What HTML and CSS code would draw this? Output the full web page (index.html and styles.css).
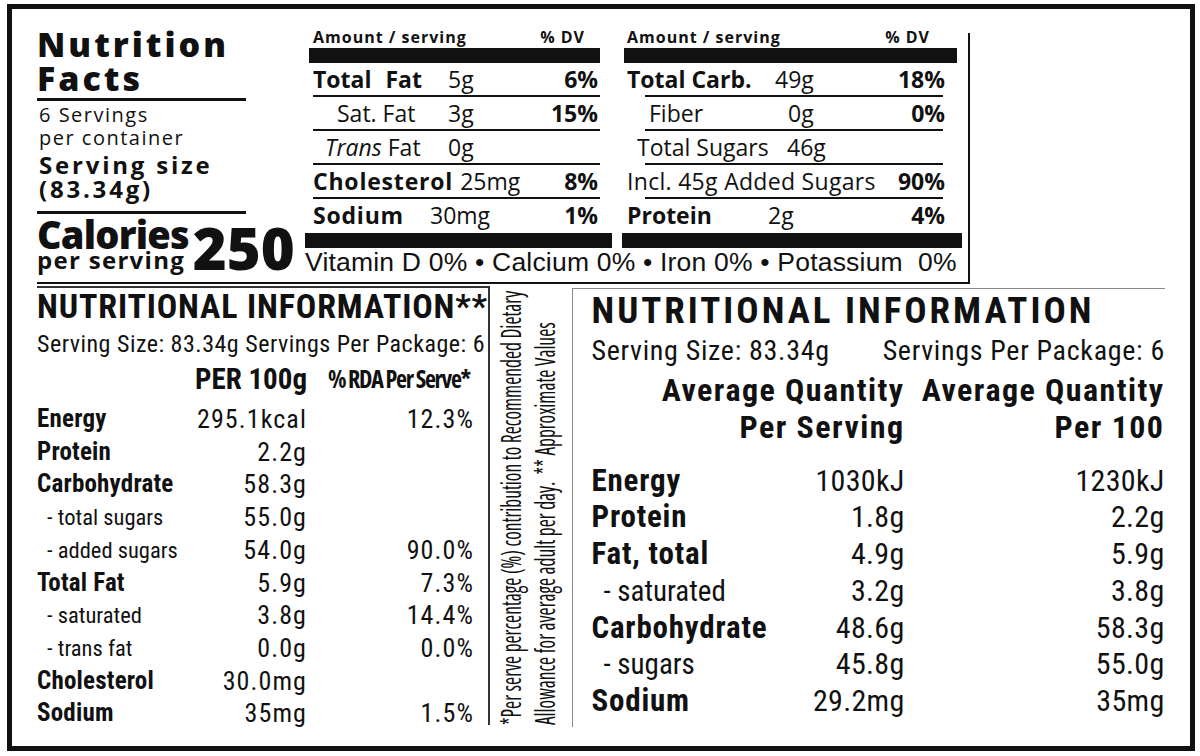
FILE: index.html
```html
<!DOCTYPE html>
<html lang="en">
<head>
<meta charset="utf-8">
<title>Nutrition Facts</title>
<link rel="stylesheet" href="styles.css">
</head>
<body>
<div class="frame">
  <section class="top">
    <div class="nf">
      <h1 class="nf-title">Nutrition<br>Facts</h1>
      <p class="nf-reg">6 Servings<br>per container</p>
      <p class="nf-bold">Serving size<br>(83.34g)</p>
      <div class="nf-cal">
        <div class="cal-lbl">
          <div class="cal-word">Calories</div>
          <div class="cal-per">per serving</div>
        </div>
        <div class="cal-num">250</div>
      </div>
    </div>
    <div class="dv">
      <div class="boxes">
        <div class="box box-a">
          <div class="box-head"><span>Amount / serving</span><span>% DV</span></div>
          <div class="bar"></div>
          <div class="row"><span class="n b tf">Total Fat</span><span class="q">5g</span><span class="p b">6%</span></div>
          <div class="row"><span class="n sat">Sat. Fat</span><span class="q">3g</span><span class="p b">15%</span></div>
          <div class="row"><span class="n trans"><i>Trans</i> Fat</span><span class="q">0g</span></div>
          <div class="row"><span class="n b chol">Cholesterol</span><span class="q">25mg</span><span class="p b">8%</span></div>
          <div class="row last"><span class="n b sod">Sodium</span><span class="q">30mg</span><span class="p b">1%</span></div>
          <div class="bar bar-end"></div>
        </div>
        <div class="box box-b">
          <div class="box-head"><span>Amount / serving</span><span>% DV</span></div>
          <div class="bar"></div>
          <div class="row"><span class="n b">Total Carb.</span><span class="q">49g</span><span class="p b">18%</span></div>
          <div class="row"><span class="n fib">Fiber</span><span class="q">0g</span><span class="p b">0%</span></div>
          <div class="row"><span class="n sug">Total Sugars</span><span class="q">46g</span></div>
          <div class="row"><span class="n incl">Incl. 45g Added Sugars</span><span class="p b">90%</span></div>
          <div class="row last"><span class="n b prot">Protein</span><span class="q">2g</span><span class="p b">4%</span></div>
          <div class="bar bar-end"></div>
        </div>
      </div>
      <div class="vit">Vitamin D 0% • Calcium 0% • Iron 0% • Potassium&nbsp; 0%</div>
    </div>
  </section>

  <section class="bottom">
    <div class="ni-l">
      <h2 class="nl-title">NUTRITIONAL INFORMATION**</h2>
      <div class="nl-serv"><span>Serving Size: 83.34g</span><span>Servings Per Package: 6</span></div>
      <div class="nl-row nl-head"><span></span><span class="nl-c2">PER 100g</span><span class="nl-c3 rda">% RDA Per Serve*</span></div>
      <div class="nl-rows">
        <div class="nl-row"><span class="lb">Energy</span><span class="v">295.1kcal</span><span class="v">12.3%</span></div>
        <div class="nl-row"><span class="lb">Protein</span><span class="v">2.2g</span><span class="v"></span></div>
        <div class="nl-row"><span class="lb">Carbohydrate</span><span class="v">58.3g</span><span class="v"></span></div>
        <div class="nl-row"><span class="sub">- total sugars</span><span class="v">55.0g</span><span class="v"></span></div>
        <div class="nl-row"><span class="sub">- added sugars</span><span class="v">54.0g</span><span class="v">90.0%</span></div>
        <div class="nl-row"><span class="lb">Total Fat</span><span class="v">5.9g</span><span class="v">7.3%</span></div>
        <div class="nl-row"><span class="sub">- saturated</span><span class="v">3.8g</span><span class="v">14.4%</span></div>
        <div class="nl-row"><span class="sub">- trans fat</span><span class="v">0.0g</span><span class="v">0.0%</span></div>
        <div class="nl-row"><span class="lb">Cholesterol</span><span class="v">30.0mg</span><span class="v"></span></div>
        <div class="nl-row"><span class="lb">Sodium</span><span class="v">35mg</span><span class="v">1.5%</span></div>
      </div>
    </div>

    <div class="note">
      <p class="note-txt">*Per serve percentage (%) contribution to Recommended Dietary<br>Allowance for average adult per day.&nbsp; ** Approximate Values</p>
    </div>

    <div class="ni-r">
      <h2 class="nr-title">NUTRITIONAL INFORMATION</h2>
      <div class="nr-serv"><span>Serving Size: 83.34g</span><span>Servings Per Package: 6</span></div>
      <div class="nr-row nr-head"><span></span><span class="v">Average Quantity<br>Per Serving</span><span class="v">Average Quantity<br>Per 100</span></div>
      <div class="nr-rows">
        <div class="nr-row"><span class="lb">Energy</span><span class="v">1030kJ</span><span class="v">1230kJ</span></div>
        <div class="nr-row"><span class="lb">Protein</span><span class="v">1.8g</span><span class="v">2.2g</span></div>
        <div class="nr-row"><span class="lb">Fat, total</span><span class="v">4.9g</span><span class="v">5.9g</span></div>
        <div class="nr-row"><span class="sub">- saturated</span><span class="v">3.2g</span><span class="v">3.8g</span></div>
        <div class="nr-row"><span class="lb">Carbohydrate</span><span class="v">48.6g</span><span class="v">58.3g</span></div>
        <div class="nr-row"><span class="sub">- sugars</span><span class="v">45.8g</span><span class="v">55.0g</span></div>
        <div class="nr-row"><span class="lb">Sodium</span><span class="v">29.2mg</span><span class="v">35mg</span></div>
      </div>
    </div>
  </section>
</div>
</body>
</html>
```
FILE: styles.css
```css
* { box-sizing: border-box; margin: 0; padding: 0; }
html, body { width: 1200px; height: 756px; overflow: hidden; background: #fff; }
body { font-family: "Open Sans", "Noto Sans", sans-serif; color: #111; }

.frame {
  width: 1188px; height: 747px;
  margin: 4px 0 0 7px;
  border: 5px solid #111;
  overflow: hidden;
}

/* ---------- top: US style label ---------- */
.top {
  display: flex;
  margin-left: 25px;
  width: 933px;
  height: 275px;
  border-bottom: 2px solid #111;
}
.nf { width: 268px; padding-top: 18px; white-space: nowrap; }
.nf-title {
  font-size: 34px; font-weight: 800; line-height: 34px; letter-spacing: 3px;
  width: 209px; padding-bottom: 3px; border-bottom: 3px solid #111;
}
.nf-reg { font-size: 20px; line-height: 23px; margin-top: 2px; padding-left: 2px; letter-spacing: 1.5px; }
.nf-bold {
  font-size: 24px; font-weight: 700; line-height: 24px; margin-top: 4px; letter-spacing: 2.8px;
  width: 209px; padding: 0 0 9.5px 2px; border-bottom: 3px solid #111;
}
.nf-cal { display: flex; align-items: flex-end; margin-top: 3px; }
.cal-word { font-size: 38px; font-weight: 800; line-height: 34px; letter-spacing: -.8px; }
.cal-per { font-size: 24px; font-weight: 700; line-height: 18px; letter-spacing: 1.3px; }
.cal-num { font-size: 58px; font-weight: 800; line-height: 43px; margin-left: 4px; }

.dv {
  width: 665px;
  margin-top: 24px;
  border-right: 2px solid #111;
  display: flex; flex-direction: column;
}
.boxes { display: flex; gap: 24px; padding-left: 4px; margin-top: -6px; }
.box { display: flex; flex-direction: column; }
.box-a { width: 291px; }
.box-b { width: 333px; }
.box-head {
  display: flex; justify-content: space-between;
  font-size: 16px; font-weight: 700; line-height: 21px; height: 21px; letter-spacing: 1px;
  white-space: nowrap;
}
.box-a .box-head { padding: 0 15px 0 4px; }
.box-b .box-head { padding: 0 27px 0 3px; }
.bar { height: 15px; background: #111; }
.box-a .bar-end { margin: 0 -12px 0 -4px; }
.box-b .bar-end { margin: 0 -5px 0 -2px; }

.row {
  display: flex; height: 34px;
  font-size: 23px; line-height: 32px; white-space: nowrap;
  background: linear-gradient(#111, #111) no-repeat;
}
.row.last { background: none; }
.box-a .row { padding: 0 2px 0 4px; background-size: calc(100% - 4px) 2px; background-position: 4px 100%; }
.box-b .row { padding: 0 12px 0 3px; background-size: calc(100% - 35px) 2px; background-position: 21px 100%; }
.row .n { flex: none; }
.row .b { font-weight: 700; }
.row .p { margin-left: auto; }
.box-a .n { width: 135px; }
.box-a .tf { word-spacing: 8px; }
.box-a .sat { padding-left: 24px; }
.box-a .trans { padding-left: 12px; }
.box-a .chol { width: auto; margin-right: 7px; letter-spacing: .8px; }
.box-a .sod { width: 117px; letter-spacing: .8px; }
.box-b .n { width: 148px; }
.box-b .fib { width: 161px; padding-left: 22px; }
.box-b .sug { width: 160px; padding-left: 10px; }
.box-b .incl { width: auto; letter-spacing: .3px; }
.box-b .prot { width: 141px; }

.vit {
  font-family: "Liberation Sans", Arial, sans-serif;
  font-size: 26.5px; line-height: 28px; height: 34px; white-space: nowrap; letter-spacing: .2px;
}

/* ---------- bottom: AU/NZ style panels ---------- */
.bottom { display: flex; height: 462px; }
.ni-l, .ni-r { font-family: "Roboto Condensed", "Open Sans", sans-serif; }

.ni-l {
  flex: none;
  margin: 2px 0 0 25px;
  width: 453px; height: 439px;
  border-top: 2px solid #333; border-right: 2px solid #333;
  padding-top: 2px;
  white-space: nowrap;
}
.nl-title { font-size: 34px; font-weight: 700; line-height: 33px; letter-spacing: .85px; }
.nl-serv {
  display: flex; justify-content: space-between;
  font-size: 24px; line-height: 32px; margin-top: 4.5px; padding-right: 3px; letter-spacing: .5px;
}
.nl-row { display: grid; grid-template-columns: 150px 120px 167px; }
.nl-head { font-size: 29px; font-weight: 700; line-height: 34px; margin-top: 2.5px; }
.nl-head .nl-c2 { text-align: right; }
.nl-head .rda {
  font-family: "Open Sans", sans-serif; font-stretch: 75%;
  text-align: right; font-size: 24px; letter-spacing: -1.3px; padding-right: 4px;
}
.nl-rows { margin-top: 7px; }
.nl-rows .nl-row { line-height: 32.7px; font-size: 26px; }
.nl-rows .lb { font-weight: 700; font-size: 25px; letter-spacing: .2px; }
.nl-rows .sub { font-size: 22.5px; padding-left: 10px; }
.nl-rows .v { text-align: right; letter-spacing: 1.1px; }

.note { flex: none; width: 82px; height: 438px; margin-top: 4px; padding-left: 4px; overflow: hidden; }
.note-txt {
  writing-mode: vertical-rl;
  height: 720px;
  font-family: "Open Sans", sans-serif;
  font-size: 27px; line-height: 34px; font-stretch: 75%;
  white-space: nowrap;
  transform-origin: 50% 0;
  transform: translateY(437px) rotate(180deg) scaleY(.72);
}

.ni-r {
  flex: none;
  margin-top: 4px;
  width: 593px; height: 439px;
  border-top: 1.5px solid #8a8a8a; border-left: 1.5px solid #8a8a8a;
  padding: 6px 0 0 18.5px;
  white-space: nowrap;
}
.nr-title { font-size: 37px; font-weight: 700; line-height: 32px; letter-spacing: 3px; }
.nr-serv {
  display: flex; justify-content: space-between;
  font-size: 28px; line-height: 36px; margin-top: 5.5px; letter-spacing: .7px;
}
.nr-row { display: grid; grid-template-columns: 70px 243px 260px; }
.nr-row .v { text-align: right; }
.nr-head { font-size: 32px; font-weight: 700; line-height: 37.5px; margin-top: 3px; letter-spacing: 1.45px; }
.nr-rows { margin-top: 16px; }
.nr-rows .nr-row { font-size: 29px; line-height: 36.8px; }
.nr-rows .lb { font-weight: 700; font-size: 31px; letter-spacing: .8px; }
.nr-rows .sub { padding-left: 12px; }
.nr-rows .v { font-size: 30px; letter-spacing: .3px; }
```
